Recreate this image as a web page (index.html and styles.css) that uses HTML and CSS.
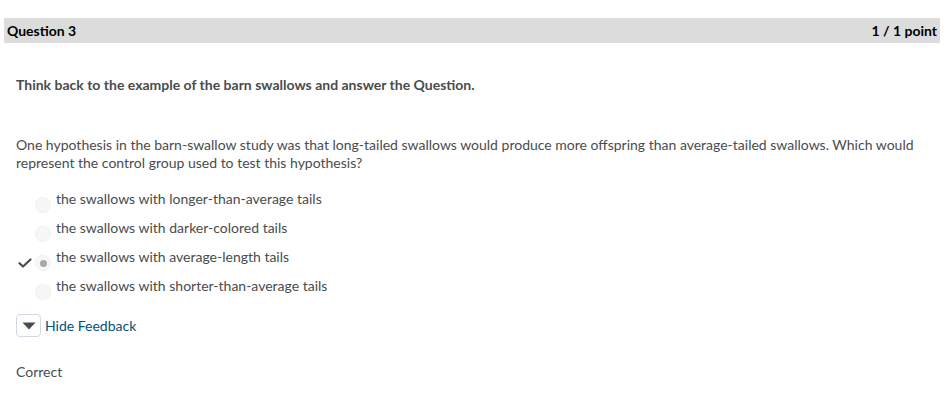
FILE: index.html
```html
<!DOCTYPE html>
<html>
<head>
<meta charset="utf-8">
<link rel="stylesheet" href="styles.css">
</head>
<body>
<div class="page">
  <div class="qhead">
    <span class="qtitle">Question 3</span>
    <span class="qscore">1 / 1 point</span>
  </div>
  <div class="qbody">
    <p class="intro">Think back to the example of the barn swallows and answer the Question.</p>
    <p class="stem">One hypothesis in the barn-swallow study was that long-tailed swallows would produce more offspring than average-tailed swallows. Which would represent the control group used to test this hypothesis?</p>
    <ul class="options">
      <li class="opt"><span class="mark"></span><span class="radio"></span><span class="label">the swallows with longer-than-average tails</span></li>
      <li class="opt"><span class="mark"></span><span class="radio"></span><span class="label">the swallows with darker-colored tails</span></li>
      <li class="opt"><span class="mark"><svg width="14" height="10" viewBox="0 0 14 10"><path d="M1.5 5.2 L5 8.5 L12.5 1.5" fill="none" stroke="#494c4e" stroke-width="2.2" stroke-linecap="round" stroke-linejoin="round"/></svg></span><span class="radio checked"></span><span class="label">the swallows with average-length tails</span></li>
      <li class="opt"><span class="mark"></span><span class="radio"></span><span class="label">the swallows with shorter-than-average tails</span></li>
    </ul>
    <div class="feedback-toggle">
      <span class="tbtn"><svg width="14" height="8" viewBox="0 0 14 8"><path d="M0.5 0.5 L13.5 0.5 L7 7.5 Z" fill="#494c4e"/></svg></span>
      <span class="tlink">Hide Feedback</span>
    </div>
    <p class="result">Correct</p>
  </div>
</div>
</body>
</html>
```
FILE: styles.css
```css
html, body {
  margin: 0;
  padding: 0;
  background: #ffffff;
}
body {
  font-family: Lato, "Liberation Sans", sans-serif;
  color: #494c4e;
  font-size: 14px;
}
.page {
  padding: 18px 10px 0 4px;
}
.qhead {
  display: flex;
  justify-content: space-between;
  align-items: center;
  height: 25px;
  background: #dcdcdc;
  padding: 0 3px;
  color: #000;
  font-weight: bold;
  font-size: 14px;
}
.qbody {
  padding-left: 12px;
}
.intro {
  margin: 33px 0 0 0;
  font-weight: bold;
  line-height: 18px;
}
.stem {
  margin: 42px 0 0 0;
  line-height: 18px;
}
.options {
  list-style: none;
  margin: 14px 0 0 0;
  padding: 0;
}
.opt {
  display: flex;
  align-items: center;
  height: 29px;
}
.mark {
  width: 17px;
  display: flex;
  justify-content: flex-start;
  align-items: center;
  padding-left: 2px;
  padding-top: 8px;
}
.radio {
  width: 16px;
  height: 16px;
  border-radius: 50%;
  border: 1px solid #f0f0f0;
  background: #f7f7f7;
  box-sizing: border-box;
  margin-top: 9px;
  margin-right: 5px;
  display: flex;
  align-items: center;
  justify-content: center;
}
.radio.checked::after {
  content: "";
  width: 7px;
  height: 7px;
  border-radius: 50%;
  background: #a8a8a8;
}
.label {
  margin-top: -4px;
}
.feedback-toggle {
  display: flex;
  align-items: center;
  margin-top: 12px;
}
.tbtn {
  width: 25px;
  height: 23px;
  border: 1px solid #d3d9e3;
  border-radius: 4px;
  box-sizing: border-box;
  display: flex;
  align-items: center;
  justify-content: center;
  margin-right: 4px;
}
.tlink {
  color: #00537d;
}
.result {
  margin: 26px 0 0 0;
  line-height: 18px;
}
```
